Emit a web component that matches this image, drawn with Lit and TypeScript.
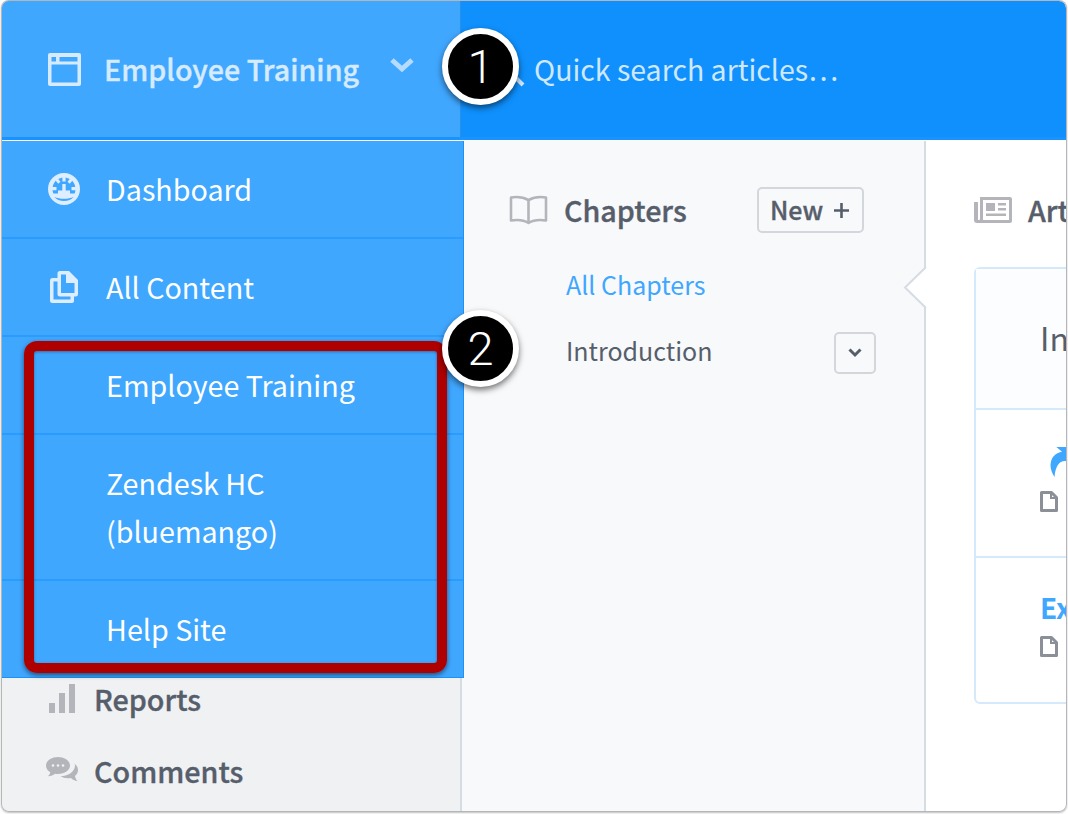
import { LitElement, html, css } from 'lit';
import { customElement } from 'lit/decorators.js';

const docIcon = html`<svg class="doc" viewBox="0 0 18 21"><path d="M1.500 1.500h10l5 5v13h-15z" fill="#fff" stroke="#8b8f97" stroke-width="3" stroke-linejoin="round"/><path d="M11 1.500v5.500h5.500" fill="none" stroke="#8b8f97" stroke-width="2"/></svg>`;

@customElement('app-root')
class AppRoot extends LitElement {
    static styles = css`
        :host {
            display: block;
            width: 1068px;
            height: 814px;
            background: #fff;
            font-family: "Noto Sans CJK SC", "Noto Sans", sans-serif;
            position: relative;
            overflow: hidden;
        }
        .window {
            position: absolute;
            left: 2px;
            top: 1px;
            width: 1064px;
            height: 810px;
            display: flex;
            flex-direction: column;
            border-radius: 7px;
            overflow: hidden;
            background: #fff;
        }
        .frame {
            position: absolute;
            left: 1px;
            top: 0;
            width: 1066px;
            height: 812px;
            border-radius: 8px;
            box-shadow: inset 0 0 0 1px #b4b6b8, 0 1px 2px rgba(0, 0, 0, .25);
            pointer-events: none;
        }

        /* top bar */
        .topbar {
            height: 136px;
            display: flex;
            background: #0f90fd;
            border-bottom: 3px solid #1a93ff;
            flex: none;
        }
        .project {
            width: 459px;
            background: #40a7ff;
            border-right: 1px solid #2a8fe6;
            display: flex;
            align-items: center;
            color: #d6ebff;
            font-size: 28.700px;
            font-weight: 500;
            -webkit-text-stroke: .35px currentColor;
            box-sizing: border-box;
            padding-left: 46px;
        }
        .project .name { margin-left: 23px; padding-bottom: 1px; }
        .project .chev { margin-left: 30px; margin-top: -9px; }
        .search {
            flex: 1;
            display: flex;
            align-items: center;
            padding-left: 32px;
            color: #cfe8ff;
            font-size: 28.500px;
            gap: 9px;
        }
        .search svg { margin-top: 3px; }
        .search span { padding-bottom: 2px; }

        .body {
            flex: 1;
            display: flex;
            min-height: 0;
            margin-top: 1px;
        }

        /* sidebar */
        .sidebar {
            width: 460px;
            flex: none;
            background: #f0f1f3;
            border-right: 2px solid #d5dce3;
            box-sizing: border-box;
            display: flex;
            flex-direction: column;
            position: relative;
        }
        .menu {
            width: 462px;
            box-sizing: border-box;
            background: #40a7ff;
            border-right: 1px solid #1a93ff;
            border-bottom: 1px solid #1a93ff;
            color: #fff;
            font-size: 28.700px;
            line-height: 48px;
            position: relative;
            z-index: 2;
            flex: none;
        }
        .menu-item {
            border-bottom: 2px solid #2a9bff;
            padding: 24px 20px 24px 104px;
            position: relative;
        }
        .menu-item:last-child { border-bottom: 0; }
        .menu-item svg {
            position: absolute;
            left: 46px;
            top: 32px;
        }
        .side-links {
            display: flex;
            flex-direction: column;
            gap: 28px;
            margin-top: -1px;
            color: #575e6b;
            font-size: 28.700px;
            font-weight: 500;
            -webkit-text-stroke: .35px currentColor;
            line-height: 44px;
        }
        .side-link {
            display: flex;
            align-items: center;
            padding-left: 44px;
            height: 44px;
        }
        .side-link svg { width: 32px; margin-right: 16px; flex: none; }

        /* chapters column */
        .chapters {
            width: 464px;
            flex: none;
            background: #f8f9fb;
            box-sizing: border-box;
            border-right: 2px solid #d5dce3;
            padding: 46px 48px 0 47px;
            color: #575e6b;
        }
        .col-head {
            display: flex;
            align-items: center;
            height: 46px;
            font-size: 28.700px;
            font-weight: 500;
            -webkit-text-stroke: .35px currentColor;
        }
        .col-head svg { flex: none; }
        .col-head .label { margin-left: 16px; padding-bottom: 2px; }
        .new-btn {
            margin-left: auto;
            margin-right: 12px;
            width: 107px;
            height: 46px;
            box-sizing: border-box;
            border: 2px solid #d3d6da;
            border-radius: 5px;
            display: flex;
            align-items: center;
            justify-content: center;
            gap: 11px;
            font-size: 25px;
            padding: 0 2px 2px 0;
        }
        .new-btn svg { margin-top: 2px; }
        .chapter {
            display: flex;
            align-items: center;
            justify-content: space-between;
            height: 42px;
            padding-left: 57px;
            font-size: 25px;
            margin-top: 24px;
        }
        .chapter.active { color: #40a7ff; margin-top: 30px; }
        .select-btn {
            width: 42px;
            height: 42px;
            flex: none;
            box-sizing: border-box;
            margin-top: 6px;
            border: 2px solid #d3d6da;
            border-radius: 5px;
            display: flex;
            align-items: center;
            justify-content: center;
        }

        /* articles column */
        .articles {
            flex: 1;
            min-width: 0;
            background: #fff;
            padding: 46px 0 0 48px;
            color: #575e6b;
            position: relative;
            white-space: nowrap;
        }
        .notch {
            position: absolute;
            left: -23px;
            top: 125px;
        }
        .card {
            width: 600px;
            margin-top: 34px;
            border: 2px solid #d6e9fb;
            border-radius: 6px;
            background: #fff;
            box-sizing: border-box;
        }
        .card-row {
            box-sizing: border-box;
            border-top: 2px solid #d6e9fb;
            padding-left: 64px;
            display: flex;
            flex-direction: column;
        }
        .card-row.head {
            border-top: 0;
            height: 139px;
            background: #fcfdfe;
            justify-content: center;
            font-size: 32px;
            padding-bottom: 4px;
        }
        .card-row.one { height: 148px; padding-top: 37px; }
        .card-row.two { height: 146px; padding-top: 29px; }
        .card-row svg.doc { width: 18px; height: 21px; display: block; }
        .link-title {
            color: #40a7ff;
            font-size: 28px;
            font-weight: 700;
            line-height: 40px;
            height: 49px;
        }
        .share { display: block; margin-left: 9px; margin-bottom: 14px; }

        /* annotations */
        .callout {
            position: absolute;
            left: 24px;
            top: 341px;
            width: 423px;
            height: 332px;
            box-sizing: border-box;
            border: 10px solid #ae0000;
            border-radius: 13px;
            box-shadow: 0 2px 5px rgba(0, 0, 0, .55), inset 0 1px 3px rgba(0, 0, 0, .35);
            z-index: 5;
        }
        .badge {
            position: absolute;
            width: 77px;
            height: 77px;
            box-sizing: border-box;
            border: 6px solid #fff;
            border-radius: 50%;
            background: #000;
            color: #fff;
            font-family: Roboto, "Liberation Sans", sans-serif;
            font-weight: 300;
            font-size: 47px;
            display: flex;
            align-items: center;
            justify-content: center;
            box-shadow: 0 3px 6px rgba(0, 0, 0, .55);
            z-index: 6;
        }
        .badge.one { left: 442px; top: 28px; }
        .badge.two { left: 442px; top: 310px; }
    `;

    render() {
        return html`
            <div class="window">
                <div class="topbar">
                    <div class="project">
                        <svg width="33" height="33" viewBox="0 0 33 33"><path fill="#d6ebff" fill-rule="evenodd" d="M2 0h29a2 2 0 0 1 2 2v29a2 2 0 0 1-2 2H2a2 2 0 0 1-2-2V2a2 2 0 0 1 2-2zm1.500 11.500v18h26v-18zM3.500 4v4.500H8V4zm8 0v4.500h18V4z"/></svg>
                        <span class="name">Employee Training</span>
                        <svg class="chev" width="26" height="16" viewBox="0 0 26 16"><path d="M3 3l10 9 10-9" fill="none" stroke="#b5dcff" stroke-width="5"/></svg>
                    </div>
                    <div class="search">
                        <svg width="32" height="32" viewBox="0 0 32 32"><circle cx="13" cy="13" r="10" fill="none" stroke="#cfe8ff" stroke-width="3"/><path d="M21 21l9 9" stroke="#cfe8ff" stroke-width="4"/></svg>
                        <span>Quick search articles…</span>
                    </div>
                </div>
                <div class="body">
                    <div class="sidebar">
                        <div class="menu">
                            <div class="menu-item">
                                <svg width="32" height="32" viewBox="0 0 32 32"><path fill="#dceeff" fill-rule="evenodd" d="M16 0a16 16 0 1 1 0 32 16 16 0 0 1 0-32zM16 4.500C9.500 4.500 4.500 9.500 4.500 16c0 1.500.3 3 .8 4.500h21.400c.5-1.500.8-3 .8-4.500 0-6.500-5-11.500-11.500-11.500zM6.500 24c2 2.500 5.500 4 9.500 4s7.500-1.500 9.500-4c-2.500 1.200-5.800 1.800-9.500 1.800S9 25.200 6.500 24z"/><path fill="#dceeff" d="M14.400 4h3.200v4.500h-3.200zM7.500 7.500l2.300-2 2.700 3.300-2.300 2zM24.500 7.500l-2.300-2-2.700 3.300 2.300 2zM4 14h4.500v3.200H4zM23.500 14H28v3.200h-4.500zM14.300 11h3.400v6.500H22v3.500H10v-3.500h4.300z"/></svg>
                                Dashboard
                            </div>
                            <div class="menu-item">
                                <svg width="32" height="32" viewBox="0 0 32 32"><path fill="#dceeff" fill-rule="evenodd" d="M12 0h9l9 9v14a2.500 2.500 0 0 1-2.500 2.500H26V30a2 2 0 0 1-2 2H4.500A2.500 2.500 0 0 1 2 29.500V9.500A2.500 2.500 0 0 1 4.500 7H9.500V2.500A2.500 2.500 0 0 1 12 0zM5.500 10.500V28.500H22.500V25.500H12A2.500 2.500 0 0 1 9.500 23V10.500zM13 3.500V22H26.500V12H18V3.500z"/></svg>
                                All Content
                            </div>
                            <div class="menu-item">Employee Training</div>
                            <div class="menu-item">Zendesk HC<br>(bluemango)</div>
                            <div class="menu-item">Help Site</div>
                        </div>
                        <div class="side-links">
                            <div class="side-link">
                                <svg width="32" height="30" viewBox="0 0 32 30"><path fill="#b3b5ba" d="M3 19h6v10H3zM13 9h6v20h-6zM23 0h6v29h-6z"/></svg>
                                Reports
                            </div>
                            <div class="side-link">
                                <svg width="32" height="28" viewBox="0 0 32 28"><path fill="#b3b5ba" d="M12 0c6.600 0 12 3.800 12 8.500S18.600 17 12 17c-1 0-2-.1-3-.3-1.500 1.300-4 2.300-7 2.500 1.200-1 2-2.300 2.300-3.900C1.700 13.800 0 11.300 0 8.500 0 3.800 5.400 0 12 0zM27 6c3 1.400 5 3.900 5 7 0 2.500-1.200 4.600-3 6 .3 2 1.200 3.800 2.500 5-2.500-.3-5-1.300-6.500-3-1 .2-2 .3-3 .3-3 0-5.500-.8-7.500-2 8.500-.3 14.500-5 14.500-11 0-.8-.3-1.500-2-2.300z"/><circle cx="7" cy="8.500" r="1.300" fill="#f0f1f3"/><circle cx="12" cy="8.500" r="1.300" fill="#f0f1f3"/><circle cx="17" cy="8.500" r="1.300" fill="#f0f1f3"/></svg>
                                Comments
                            </div>
                        </div>
                    </div>

                    <div class="chapters">
                        <div class="col-head">
                            <svg width="39" height="30" viewBox="0 0 39 30"><path d="M19.500 5C15 2.500 8 1.500 2 2.500v23c6-1 13.500 0 17.500 2.500 4-2.500 11.500-3.500 17.500-2.500v-23c-6-1-13 0-17.500 2.500zM19.500 5v23" fill="none" stroke="#b3b5ba" stroke-width="2.600" stroke-linejoin="round"/></svg>
                            <span class="label">Chapters</span>
                            <span class="new-btn">New <svg width="15" height="15" viewBox="0 0 15 15"><path d="M7.500 0v15M0 7.500h15" stroke="#575e6b" stroke-width="2.600"/></svg></span>
                        </div>
                        <div class="chapter active">All Chapters</div>
                        <div class="chapter">
                            Introduction
                            <span class="select-btn"><svg width="14" height="10" viewBox="0 0 14 10"><path d="M1.500 1.500L7 7l5.500-5.500" fill="none" stroke="#575e6b" stroke-width="3"/></svg></span>
                        </div>
                    </div>

                    <div class="articles">
                        <svg class="notch" width="25" height="44" viewBox="0 0 25 44"><path d="M23 1L2 21.500 23 42" fill="#fff" stroke="#d5dce3" stroke-width="2"/><path d="M23 2v39h2V2z" fill="#fff"/></svg>
                        <div class="col-head">
                            <svg width="38" height="26" viewBox="0 0 38 26"><path fill="#b3b5ba" fill-rule="evenodd" d="M6 0h30a2 2 0 0 1 2 2v22a2 2 0 0 1-2 2H3a3 3 0 0 1-3-3V5h4v18h1a1 1 0 0 0 1-1zm3 3v20h26V3zm3 3h9v8h-9zm12 0h8v2.500h-8zm0 5h8v2.500h-8zM12 16.500h20V19H12z"/></svg>
                            <span class="label">Articles</span>
                        </div>
                        <div class="card">
                            <div class="card-row head">Introduction</div>
                            <div class="card-row one">
                                <svg class="share" width="26" height="30" viewBox="0 0 26 32"><path fill="#40a7ff" d="M7 0h19v20c-3-3-6-5-10-5-6 0-10 6-11 17C2 27 0 22 1 17 2 10 7 6 13 5z"/></svg>
                                ${docIcon}
                            </div>
                            <div class="card-row two">
                                <div class="link-title">Example</div>
                                ${docIcon}
                            </div>
                        </div>
                    </div>
                </div>
            </div>
            <div class="frame"></div>
            <div class="callout"></div>
            <div class="badge one">1</div>
            <div class="badge two">2</div>
        `;
    }
}

declare global {
    interface HTMLElementTagNameMap {
        "app-root": AppRoot;
    }
}
